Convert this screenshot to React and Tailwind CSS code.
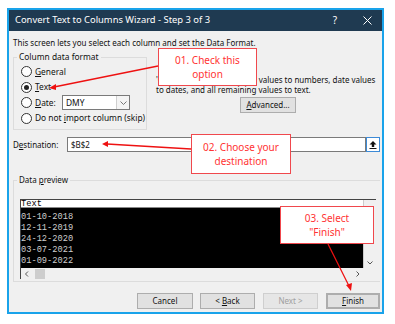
import React from "react";

const radios = [
  { label: "General", u: "G", rest: "eneral", checked: false },
  { label: "Text", u: "T", rest: "ext", checked: true },
];

const Radio = ({ checked }) => (
  <span className="w-[11px] h-[11px] rounded-full border border-[#333] bg-white flex items-center justify-center shrink-0">
    {checked && <span className="w-[5px] h-[5px] rounded-full bg-[#222]" />}
  </span>
);

const Callout = ({ className, lines }) => (
  <div
    className={`absolute border border-[#f0484d] bg-white flex flex-col items-center justify-center text-[10px] leading-[14px] text-[#ff3333] ${className}`}
  >
    {lines.map((l) => (
      <span key={l}>{l}</span>
    ))}
  </div>
);

const Btn = ({ children, className = "" }) => (
  <div
    className={`h-[16px] flex items-center justify-center border border-[#adadad] bg-[#e1e1e1] text-[8px] ${className}`}
  >
    {children}
  </div>
);

const rows = ["01-10-2018", "12-11-2019", "24-12-2020", "03-07-2021", "01-09-2022"];

export default function App() {
  return (
    <div
      className="relative w-[395px] h-[324px] bg-white text-[#111]"
      style={{ fontFamily: '"Noto Sans", "Liberation Sans", sans-serif' }}
    >
      <div className="absolute left-[7px] top-[8px] w-[377px] h-[306px] border-2 border-[#19a3ea] bg-[#f0f0f0] flex flex-col">
        {/* title bar */}
        <div className="h-[21px] bg-[#1f3a51] text-white flex items-center pl-[6px] text-[9.4px] shrink-0">
          <span className="flex-1">Convert Text to Columns Wizard - Step 3 of 3</span>
          <span className="w-[12px] text-center mr-[22px] text-[10px]">?</span>
          <svg width="9" height="9" viewBox="0 0 9 9" className="mr-[10px]">
            <path d="M0.5 0.5 L8.5 8.5 M8.5 0.5 L0.5 8.5" stroke="white" strokeWidth="1" />
          </svg>
        </div>

        {/* body */}
        <div className="flex-1 relative text-[8px] leading-[10px]">
          <div className="pl-[4px] pt-[6px] h-[17px] leading-[11px]">
            This screen lets you select each column and set the Data Format.
          </div>

          <div className="flex mt-[4px]">
            <fieldset className="ml-[4px] w-[134px] h-[78px] border border-[#dcdcdc] pl-[7px]">
              <legend className="px-[2px] -ml-[4px] leading-[10px] text-[8.4px]">Column data format</legend>
              <div className="flex flex-col gap-[4.5px] pt-[4px]">
                {radios.map((r) => (
                  <div key={r.label} className="flex items-center gap-[3px] h-[11px] text-[8.4px]">
                    <Radio checked={r.checked} />
                    <span>
                      <u>{r.u}</u>
                      {r.rest}
                    </span>
                  </div>
                ))}
                <div className="flex items-center gap-[3px] h-[11px] text-[8.4px]">
                  <Radio />
                  <span className="w-[24px]">
                    <u>D</u>ate:
                  </span>
                  <div className="w-[68px] h-[15px] border border-[#7a7a7a] bg-white flex items-center">
                    <span className="flex-1 pl-[3px]">DMY</span>
                    <span className="w-[13px] h-full border-l border-[#cfcfcf] bg-[#f4f4f4] flex items-center justify-center">
                      <svg width="7" height="4" viewBox="0 0 7 4">
                        <path d="M0.5 0.5 L3.5 3.5 L6.5 0.5" stroke="#777" fill="none" />
                      </svg>
                    </span>
                  </div>
                </div>
                <div className="flex items-center gap-[3px] h-[11px] text-[8.4px]">
                  <Radio />
                  <span className="whitespace-nowrap">
                    Do not <u>i</u>mport column (skip)
                  </span>
                </div>
              </div>
            </fieldset>

            <div className="ml-[9px] pt-[23px] flex flex-col">
              <div className="whitespace-nowrap">
                'General' converts numeric values to numbers, date values
                <br />
                to dates, and all remaining values to text.
              </div>
              <Btn className="ml-[84px] mt-[2px] w-[56px] h-[15px]">
                <u>A</u>dvanced...
              </Btn>
            </div>
          </div>

          {/* destination */}
          <div className="flex items-center mt-[7px] ml-[4px] h-[15px]">
            <span className="w-[54px]">
              D<u>e</u>stination:
            </span>
            <div className="w-[299px] h-[15px] border border-[#7a7a7a] bg-white pl-[3px] flex items-center">
              $B$2
            </div>
            <div className="w-[14px] h-[15px] border border-[#3d8ad6] bg-white flex items-center justify-center">
              <svg width="8" height="9" viewBox="0 0 8 9">
                <path d="M4 1 L7.5 4.5 H5.2 V7 H2.8 V4.5 H0.5 Z" fill="#111" />
                <path d="M0.5 8.5 H7.5" stroke="#111" />
              </svg>
            </div>
          </div>

          {/* data preview */}
          <fieldset className="ml-[4px] mt-[23px] w-[367px] h-[107px] border border-[#dcdcdc] border-r-0 pl-[6px]">
            <legend className="px-[2px] -ml-[3px] leading-[10px]">
              Data <u>p</u>review
            </legend>
            <div className="mt-[14px] w-[356px] border-l border-t border-[#444] flex flex-col">
              <div className="flex">
                <div
                  className="w-[342px] flex flex-col text-[8.7px] leading-[11px]"
                  style={{ fontFamily: '"Liberation Mono", monospace' }}
                >
                  <div className="h-[8px] leading-[8px] bg-white border-b border-[#888] text-black">Text</div>
                  <div className="bg-black text-[#cfcfcf] h-[60px] pt-[4px]">
                    {rows.map((r) => (
                      <div key={r}>{r}</div>
                    ))}
                  </div>
                </div>
                <div className="w-[13px] bg-[#f0f0f0] border-l border-[#ccc] flex flex-col justify-end items-center pb-[3px]">
                  <svg width="6" height="4" viewBox="0 0 6 4">
                    <path d="M0.5 0.5 L3 3 L5.5 0.5" stroke="#555" fill="none" />
                  </svg>
                </div>
              </div>
              <div className="h-[11px] flex items-center bg-[#f0f0f0]">
                <svg width="12" height="6" viewBox="0 0 12 6" className="ml-[2px]">
                  <path d="M5 0.5 L2.5 3 L5 5.5" stroke="#555" fill="none" />
                </svg>
                <div className="w-[10px] h-[10px] bg-[#cdcdcd]" />
                <div className="flex-1" />
                <svg width="6" height="6" viewBox="0 0 6 6" className="mr-[15px]">
                  <path d="M1.5 0.5 L4 3 L1.5 5.5" stroke="#555" fill="none" />
                </svg>
              </div>
            </div>
          </fieldset>

          {/* buttons */}
          <div className="flex mt-[11px] ml-[128px]">
            <Btn className="w-[56px]">Cancel</Btn>
            <Btn className="w-[55px] ml-[7px]">
              &lt; <u className="ml-[2px]">B</u>ack
            </Btn>
            <Btn className="w-[55px] ml-[8px] text-[#a0a0a0] border-[#cfcfcf] bg-[#e6e6e6]">Next &gt;</Btn>
            <Btn className="w-[54px] ml-[8px] border-[#0a78d7] border-2">
              <u>F</u>inish
            </Btn>
          </div>
        </div>
      </div>

      <Callout className="left-[158px] top-[48px] w-[99px] h-[38px]" lines={["01. Check this", "option"]} />
      <Callout className="left-[191px] top-[134px] w-[100px] h-[40px]" lines={["02. Choose your", "destination"]} />
      <Callout className="left-[280px] top-[206px] w-[94px] h-[38px]" lines={["03. Select", '"Finish"']} />

      <svg className="absolute left-0 top-0 pointer-events-none" width="395" height="324">
        <g stroke="#ee1111" strokeWidth="1.3" fill="#ee1111">
          <line x1="158" y1="66" x2="54" y2="87" />
          <path d="M49 88 L56 84 L56 90 Z" stroke="none" />
          <line x1="191" y1="149" x2="107" y2="144" />
          <path d="M102 144 L108 141 L108 147 Z" stroke="none" />
          <line x1="328" y1="244" x2="349" y2="286" />
          <path d="M351 291 L346 285 L352 283 Z" stroke="none" />
        </g>
      </svg>
    </div>
  );
}
